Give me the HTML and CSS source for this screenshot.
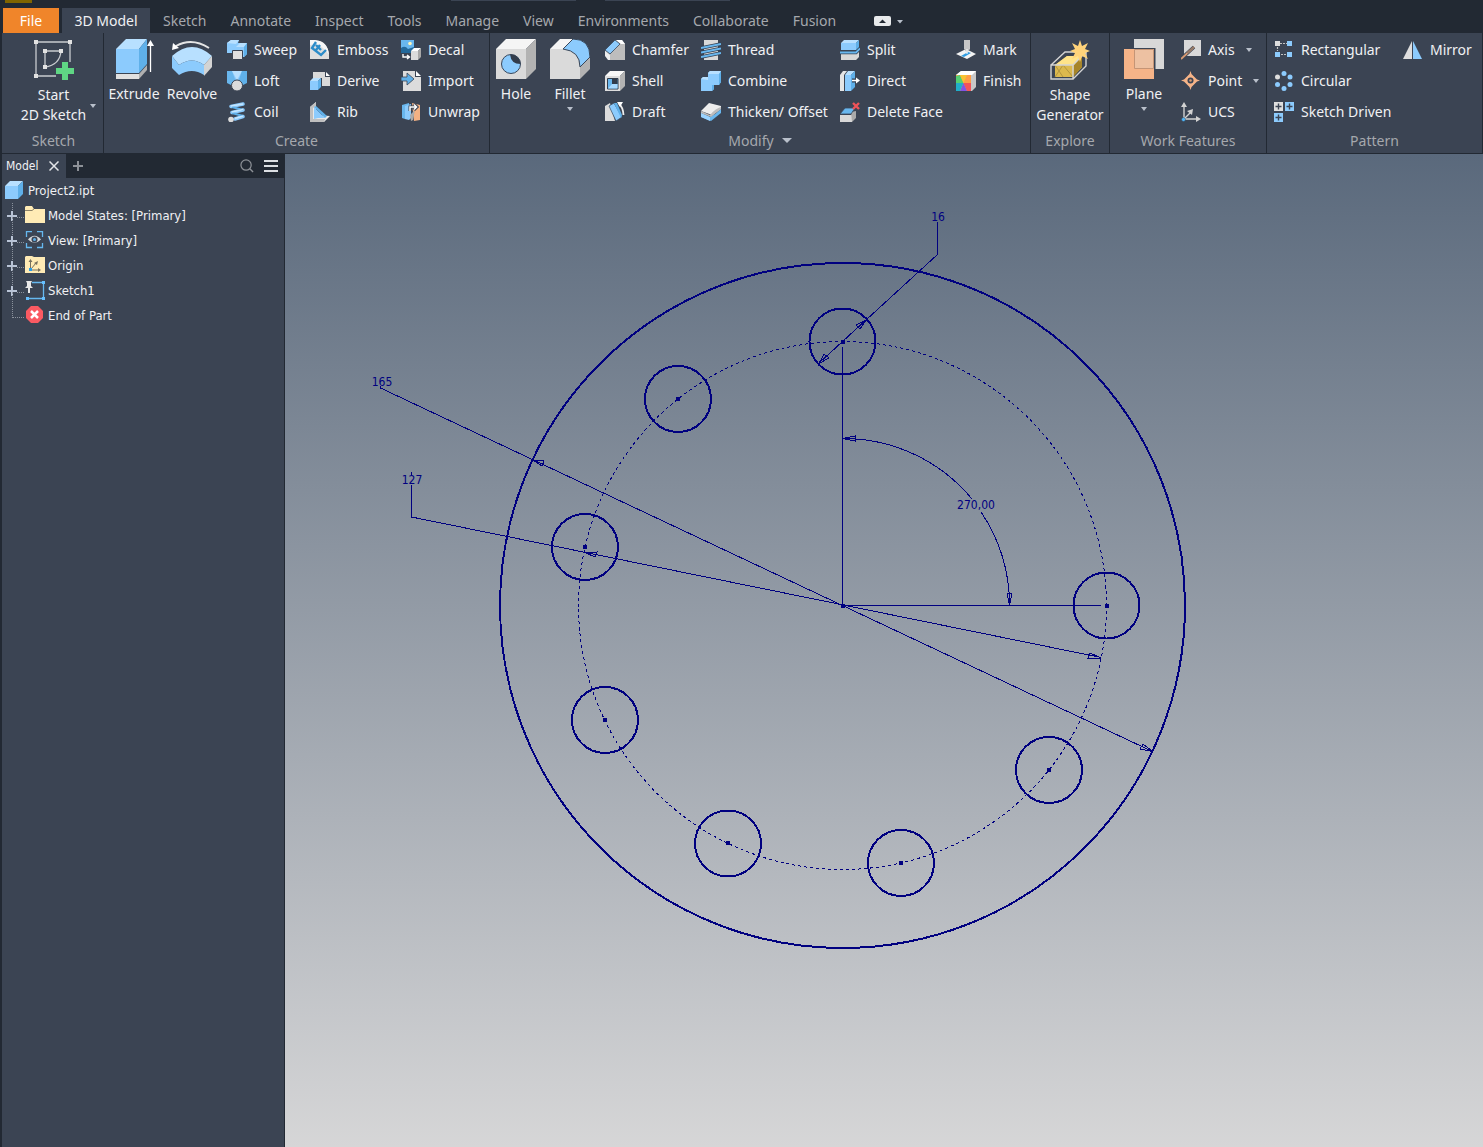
FILE: index.html
```html
<!DOCTYPE html>
<html lang="en">
<head>
<meta charset="utf-8">
<title>Project2.ipt</title>
<link rel="stylesheet" href="styles.css">
</head>
<body>
<div class="app">
  <header class="topbar">
    <div class="quickbar"><span class="quick-logo"></span><span class="quick-field"></span><span class="quick-field"></span></div>
    <nav class="tabs">
      <button class="tab file">File</button>
      <button class="tab active">3D Model</button>
      <button class="tab">Sketch</button>
      <button class="tab">Annotate</button>
      <button class="tab">Inspect</button>
      <button class="tab">Tools</button>
      <button class="tab">Manage</button>
      <button class="tab">View</button>
      <button class="tab">Environments</button>
      <button class="tab">Collaborate</button>
      <button class="tab">Fusion</button>
      <button class="collapse" aria-label="Minimize ribbon">
        <svg width="30" height="12" viewBox="0 0 30 12"><rect x="0" y="1" width="17" height="10" rx="2" fill="#e8eaec"/><path d="M5 8 8.500 4.500 12 8Z" fill="#222933"/><path d="M23 5H29L26 8.500Z" fill="#b9c0cb"/></svg>
      </button>
    </nav>
  </header>

  <div class="ribbon">
    <section class="panel p-sketch">
      <div class="tools">
        <button class="big two">
          <svg width="40" height="40" viewBox="0 0 40 40"><g fill="none" stroke="#c9ccd0" stroke-width="1.300"><path d="M2 2H36V22M2 2V36H22M11 11H27M11 11V27M27 11Q26 25 11 27"/></g><g fill="#e2e2e2"><path d="M0 0h4v4H0zM34 0h4v4h-4zM0 34h4v4H0zM9 9h4v4H9zM25 9h4v4h-4zM9 25h4v4H9z"/></g><path d="M28 22h6v6h6v6h-6v6h-6v-6h-6v-6h6z" fill="#5fd684"/></svg>
          <span>Start<br>2D Sketch</span><i class="caret side"></i>
        </button>
      </div>
      <h2>Sketch</h2>
    </section>

    <section class="panel p-create">
      <div class="tools">
        <button class="big">
          <svg width="40" height="40" viewBox="0 0 40 40"><path d="M2 35H25V40H2Z" fill="#e0e0e0"/><path d="M25 35 33 26V31L25 40Z" fill="#b0b0b0"/><path d="M2 10H25V34H2Z" fill="#8ccbfd"/><path d="M2 10 12 0H33L25 10Z" fill="#b8e0ff"/><path d="M25 10 33 0V25L25 34Z" fill="#5fb0e9"/><path d="M36.500 33V5" stroke="#fff" stroke-width="1.300"/><path d="M33 7 36.500 1 40 7Z" fill="#fff"/></svg>
          <span>Extrude</span>
        </button>
        <button class="big">
          <svg width="40" height="40" viewBox="0 0 40 40"><path d="M0 17Q20-1 40 17L32 26Q20 17 7 26Z" fill="#b8e0ff"/><path d="M0 17 7 26Q20 17 32 26V36Q20 28 7 36L0 29Z" fill="#8ccbfd"/><path d="M32 26 40 17V28L32 37Z" fill="#d4d4d4"/><path d="M37 9Q20-2 4 7" fill="none" stroke="#e4e4e4" stroke-width="2"/><path d="M0 11 1 4 7 9Z" fill="#fff"/></svg>
          <span>Revolve</span>
        </button>
        <button class="small"><svg width="20" height="20" viewBox="0 0 20 20"><path d="M0 3 4 0H12L11 3H20V14L17 17H10L6 13H0Z" fill="#8ccbfd"/><path d="M0 3 4 0H12L9 4ZM9 7 13 3H20L17 7Z" fill="#b8e0ff"/><path d="M17 7 20 3V14L17 17Z" fill="#5fb0e9"/><path d="M5.500 10.500h10v9h-10z" fill="#e0e0e0" stroke="#3b4453"/></svg>Sweep</button>
        <button class="small"><svg width="20" height="20" viewBox="0 0 20 20"><path d="M0 0H20L15 14H5Z" fill="#8ccbfd"/><path d="M0 0H5L9 11 4 14 0 12Z" fill="#69b7ee"/><path d="M5 0H15L10 9Z" fill="#b8e0ff"/><path d="M20 0H15L11 11 16 14 20 12Z" fill="#5fb0e9"/><circle cx="10" cy="14.500" r="5.500" fill="#dcdcdc" stroke="#3b4453"/></svg>Loft</button>
        <button class="small"><svg width="20" height="20" viewBox="0 0 20 20"><g fill="none" stroke="#8ccbfd" stroke-width="3.500" stroke-linecap="round"><path d="M4 4.500 16 2M5 10.500 16 8M8 17 16 14.500"/></g><path d="M5 5 16 8M5 11 16 14" stroke="#5fb0e9" stroke-width="2"/><path d="M4 4 16 2M5 10 16 7.500M8 16.500 16 14" stroke="#c5e6ff" stroke-width="1.500"/><circle cx="4" cy="17.500" r="2.800" fill="#dcdcdc"/></svg>Coil</button>
        <button class="small"><svg width="20" height="20" viewBox="0 0 20 20"><path d="M0 0Q18 0 19 15V19H0Z" fill="#dedede"/><path d="M0 0H5Q18 1 19 15L16 11Q9 3 0 5Z" fill="#f6f6f6"/><path d="M6 2 2 8 11 15 16 10M6 5 11 10M10 5 6 10" fill="none" stroke="#2c8cc9" stroke-width="2.400"/></svg>Emboss</button>
        <button class="small"><svg width="20" height="20" viewBox="0 0 20 20"><path d="M3 1H15V6H20V15H12V7H3Z" fill="#d9d9d9"/><path d="M16 1 20 5H16Z" fill="#fff"/><path d="M0 10H8V19H0Z" fill="#8ccbfd"/><path d="M0 10 3 7H11L8 10Z" fill="#b8e0ff"/><path d="M8 10 11 7V16L8 19Z" fill="#5fb0e9"/></svg>Derive</button>
        <button class="small"><svg width="20" height="20" viewBox="0 0 20 20"><path d="M0 5 6 0V13L20 14 14 20H0Z" fill="#e8e8e8"/><path d="M0 5 6 0V4L3 6V17H15L14 20H0Z" fill="#bfbfbf"/><path d="M4 5 15 16H8L4 17Z" fill="#8ccbfd"/><path d="M4 5 6 4 17 14 15 16Z" fill="#5fb0e9"/></svg>Rib</button>
        <button class="small"><svg width="20" height="20" viewBox="0 0 20 20"><path d="M0 0H13V13H0Z" fill="#69b7ee"/><path d="M0 8Q4 5 7 9L13 7V13H0Z" fill="#23699b"/><circle cx="9" cy="3.500" r="1.800" fill="#fff4b8"/><path d="M10 11H17V20H10Z" fill="#dcdcdc"/><path d="M10 11 13 8H20L17 11Z" fill="#fff"/><path d="M17 11 20 8V17L17 20Z" fill="#a8a8a8"/><path d="M2 14V17H8M6 15 8.500 17 6 19" fill="none" stroke="#fff" stroke-width="1.400"/></svg>Decal</button>
        <button class="small"><svg width="20" height="20" viewBox="0 0 20 20"><path d="M2 0H14V6H20V20H2Z" fill="#dcdcdc"/><path d="M15 0 20 5H15Z" fill="#fff"/><path d="M0 6H6V2L13 8 6 14V10H0Z" fill="#5fb0e9" stroke="#3b4453" stroke-width=".8"/></svg>Import</button>
        <button class="small"><svg width="20" height="20" viewBox="0 0 20 20"><path d="M11 1 19 3V18L13 19Z" fill="#f3b183"/><path d="M1 3 8 1V16L4 17 1 16Z" fill="#69b7ee"/><path d="M4 4 10 2V16L8 18 4 17Z" fill="#8ccbfd"/><path d="M9 13 14 8 12 18 10 19Z" fill="#aaa"/><path d="M9 9V5H15M13 2 16 5 13 8" fill="none" stroke="#3b4453" stroke-width="3"/><path d="M9 9V5H15M13 2.500 15.500 5 13 7.500" fill="none" stroke="#fff" stroke-width="1.500"/></svg>Unwrap</button>
      </div>
      <h2>Create</h2>
    </section>

    <section class="panel p-modify">
      <div class="tools">
        <button class="big">
          <svg width="40" height="40" viewBox="0 0 40 40"><path d="M0 10H30V40H0Z" fill="#dadada"/><path d="M0 10 10 0H40L30 10Z" fill="#f5f5f5"/><path d="M30 10 40 0V30L30 40Z" fill="#b3b3b3"/><circle cx="15" cy="25" r="9.500" fill="#8ccbfd" stroke="#39475a"/><path d="M14 15.500A9.500 9.500 0 0 1 24.500 25Q15 25 14 15.500Z" fill="#323c4b"/></svg>
          <span>Hole</span>
        </button>
        <button class="big">
          <svg width="40" height="40" viewBox="0 0 40 40"><path d="M0 10H12Q30 10 30 28V40H0Z" fill="#dadada"/><path d="M0 10 10 0H23L13 10Z" fill="#f5f5f5"/><path d="M30 28 40 18V30L30 40Z" fill="#b3b3b3"/><path d="M13 10 23 0Q40 0 40 18L30 28Q30 12 13 10Z" fill="#8ccbfd" stroke="#39475a"/></svg>
          <span>Fillet</span><i class="caret"></i>
        </button>
        <button class="small"><svg width="20" height="20" viewBox="0 0 20 20"><path d="M0 11 11 0H17L20 4V20H5L0 15Z" fill="#bdbdbd"/><path d="M11 0H17L20 4 16 4Z" fill="#fff"/><path d="M0 10 10 0 15 4 5 14Z" fill="#8ccbfd" stroke="#39475a" stroke-width=".8"/><path d="M0 11 5 15V20H3L0 16Z" fill="#eee"/></svg>Chamfer</button>
        <button class="small"><svg width="20" height="20" viewBox="0 0 20 20"><path d="M0 5H15V20H0Z" fill="#dedede"/><path d="M0 5 5 0H20L15 5Z" fill="#f8f8f8"/><path d="M15 5 20 0V15L15 20Z" fill="#b3b3b3"/><path d="M2.500 7.500H13V18H2.500Z" fill="#69b7ee" stroke="#323c4b"/><path d="M7 8H12.500V13H7Z" fill="#323c4b"/><path d="M3 17.500 7 13H12.500V17.500Z" fill="#a9daff"/></svg>Shell</button>
        <button class="small"><svg width="20" height="20" viewBox="0 0 20 20"><path d="M0 4 5 1 10 19H0Z" fill="#dcdcdc"/><path d="M4 4 9 1 17 15 11 19Z" fill="#8ccbfd" stroke="#39475a" stroke-width=".7"/><path d="M9 1 12 1 17 13 16 16Z" fill="#5fb0e9"/><path d="M14 2Q18 5 18.500 13" fill="none" stroke="#eee" stroke-width="1.800"/><path d="M12 0H18L15 5Z" fill="#fff"/></svg>Draft</button>
        <button class="small"><svg width="20" height="20" viewBox="0 0 20 20"><path d="M3 0H17V20H3Z" fill="#d9d9d9"/><path d="M0 8 20 4M0 12.500 20 8.500M0 17 20 13" stroke="#344052" stroke-width="3.600"/><path d="M0 8 20 4M0 12.500 20 8.500M0 17 20 13" stroke="#69b7ee" stroke-width="2"/></svg>Thread</button>
        <button class="small"><svg width="20" height="20" viewBox="0 0 20 20"><path d="M0 8 2 6H7V2L9 0H20V11L18 14H13V18L11 20H0Z" fill="#8ccbfd"/><path d="M7 2 9 0H20L18 3H8ZM0 8 2 6H7V9Z" fill="#b8e0ff"/><path d="M18 3 20 0V11L18 14ZM11 14H13V18L11 20Z" fill="#5fb0e9"/></svg>Combine</button>
        <button class="small"><svg width="20" height="20" viewBox="0 0 20 20"><path d="M0 9 8 1 20 4V7L11 13Z" fill="#ededed"/><path d="M0 11 9 15Q15 12 20 7V11L10 19 0 15Z" fill="#69b7ee"/><path d="M0 11 9 15V19L0 15Z" fill="#9ad3ff"/><path d="M0 9 9 13Q15 6 20 5V7L10 15 0 11Z" fill="#bdbdbd"/></svg>Thicken/ Offset</button>
        <button class="small"><svg width="20" height="20" viewBox="0 0 20 20"><path d="M1 14H16L19 11V17L16 20H1Z" fill="#d8d8d8"/><path d="M1 3H16V10H1Z" fill="#8ccbfd"/><path d="M1 3 4 0H19L16 3Z" fill="#b8e0ff"/><path d="M16 3 19 0V8L16 11Z" fill="#5fb0e9"/><path d="M0 12.500H16L20 8.500" fill="none" stroke="#344052" stroke-width="3.500"/><path d="M0 12.500H16L20 8.500" fill="none" stroke="#69b7ee" stroke-width="1.800"/></svg>Split</button>
        <button class="small"><svg width="20" height="20" viewBox="0 0 20 20"><path d="M0 4 3 0H7L4 4V20H0Z" fill="#e5e5e5"/><path d="M5 4H11V20H5Z" fill="#8ccbfd"/><path d="M5 4 8 0H15L11 4Z" fill="#b8e0ff"/><path d="M11 4 15 0V16L11 20Z" fill="#5fb0e9"/><path d="M12 9.500H17" stroke="#344052" stroke-width="4"/><path d="M12 9.500H17" stroke="#fff" stroke-width="1.500"/><path d="M16 6.500 20 9.500 16 12.500Z" fill="#fff"/></svg>Direct</button>
        <button class="small"><svg width="20" height="20" viewBox="0 0 20 20"><path d="M0 13H12V20H0Z" fill="#d8d8d8"/><path d="M11 10 16 9V16L12 20Z" fill="#aaa"/><path d="M0 12 5 6H15L11 12Z" fill="#69b7ee" stroke="#39475a" stroke-width=".8"/><path d="M13 1 19 7M19 1 13 7" stroke="#ef5359" stroke-width="2.400"/></svg>Delete Face</button>
        <button class="small"><svg width="20" height="20" viewBox="0 0 20 20"><path d="M0 14 8 10H12L20 14 11 19Z" fill="#f3f3f3"/><path d="M5 16 12 12 15 13 8 17Z" fill="#2f9be0"/><path d="M8 0H14V9L11 13 8 9Z" fill="#c7c7c7"/><path d="M11 9V14" stroke="#fff"/></svg>Mark</button>
        <button class="small"><svg width="20" height="20" viewBox="0 0 20 20"><path d="M0 4 5 0H20V16L16 20H0Z" fill="#c8c8c8"/><path d="M0 4 5 0H20L16 4Z" fill="#fff"/><path d="M0 4H15V20H0Z" fill="#ff9d45"/><path d="M0 5V12H7.500L4 4Z" fill="#55cf72"/><path d="M4 4H11L7.500 12Z" fill="#f7c332"/><path d="M7.500 12H15V20H11Z" fill="#f45459"/><path d="M7.500 12 11 20H4Z" fill="#8253e6"/><path d="M0 12H7.500L4 20H0Z" fill="#20aeca"/></svg>Finish</button>
      </div>
      <h2>Modify <i class="caret wide"></i></h2>
    </section>

    <section class="panel p-explore">
      <div class="tools">
        <button class="big two">
          <svg width="40" height="40" viewBox="0 0 40 40"><path d="M5 25 17 16H32V27L23 37H5Z" fill="#dcb94e"/><path d="M5 25 17 16H32L24 25Z" fill="#ffe389"/><path d="M24 25 32 16V27L23 37Z" fill="#a78529"/><path d="M5 37 13 25 23 37M5 25 13 37" fill="none" stroke="#b3963f"/><path d="M1 25H23V39H1ZM1 25 15 12H36L23 25M36 12V26L23 39" fill="none" stroke="#d4d4d4" stroke-width="1.400"/><path d="m30 0 2 6 6-3-3 6 5 2-5 2 3 6-6-3-2 6-2-6-6 3 3-6-5-2 5-2-3-6 6 3Z" fill="#ffd37a"/></svg>
          <span>Shape<br>Generator</span>
        </button>
      </div>
      <h2>Explore</h2>
    </section>

    <section class="panel p-work">
      <div class="tools">
        <button class="big">
          <svg width="40" height="40" viewBox="0 0 40 40"><path d="M10 0H40V30H10Z" fill="#d8d8d8"/><path d="M31.500 9V31.500H9V9Z" fill="#3b4453"/><path d="M0 10H30V40H0Z" fill="#f6b488"/><path d="M10.500 10.500H29.500V29.500H10.500Z" fill="#edc1a2" stroke="#c59576"/></svg>
          <span>Plane</span><i class="caret"></i>
        </button>
        <button class="small"><svg width="20" height="20" viewBox="0 0 20 20"><path d="M3 0H20V16H3Z" fill="#d9d9d9"/><path d="M0 19 13 7" stroke="#3b4453" stroke-width="3.500"/><path d="M0 19 13 7" stroke="#d89a72" stroke-width="1.800"/><path d="M6 13 13 7" stroke="#927969" stroke-width="2"/></svg>Axis<i class="caret"></i></button>
        <button class="small"><svg width="20" height="20" viewBox="0 0 20 20"><path d="M9.500 0 10.500 3 16 8.500 19 9.500 16 10.500 10.500 16 9.500 19 8.500 16 3 10.500 0 9.500 3 8.500 8.500 3Z" fill="#f6b488"/><circle cx="9.500" cy="9.500" r="3" fill="#3b4453"/><circle cx="9.500" cy="9.500" r="1.300" fill="#d89a72"/></svg>Point<i class="caret"></i></button>
        <button class="small"><svg width="20" height="20" viewBox="0 0 20 20"><path d="M3 4V17H17M3 17 10 10" fill="none" stroke="#d2d2d2" stroke-width="1.400"/><path d="M0 5 3 0 6 5ZM15 14 20 17 15 20ZM6 9 12 7 11 13Z" fill="#d2d2d2"/><circle cx="2.500" cy="17.500" r="2" fill="#4fb3f5" stroke="#3b4453" stroke-width=".5"/></svg>UCS</button>
      </div>
      <h2>Work Features</h2>
    </section>

    <section class="panel p-pattern">
      <div class="tools">
        <button class="small"><svg width="20" height="20" viewBox="0 0 20 20"><path d="M6 3.500H13M7 14.500H13M3.500 7V11" stroke="#c3c3c3" stroke-width="1.200" stroke-dasharray="2 1"/><path d="M1 1h5v5H1z" fill="#dedede"/><path d="M13 1h5v5h-5zM1 12h5v5H1zM13 12h5v5h-5z" fill="#8ccbfd"/></svg>Rectangular</button>
        <button class="small"><svg width="20" height="20" viewBox="0 0 20 20"><circle cx="3.500" cy="6" r="2.500" fill="#dedede"/><g fill="#8ccbfd"><circle cx="10" cy="2.500" r="2.500"/><circle cx="16" cy="6" r="2.500"/><circle cx="3.500" cy="13.500" r="2.500"/><circle cx="16" cy="13.500" r="2.500"/><circle cx="10" cy="17.500" r="2.500"/></g></svg>Circular</button>
        <button class="small"><svg width="20" height="20" viewBox="0 0 20 20"><path d="M0 0h9v9H0z" fill="#dedede"/><path d="M11 0h9v9h-9zM0 11h9v9H0z" fill="#8ccbfd"/><path d="M4.500 1.500v6M1.500 4.500h6M15.500 1.500v6M12.500 4.500h6M4.500 12.500v6M1.500 15.500h6" stroke="#3b4453" stroke-width="1.400"/></svg>Sketch Driven</button>
        <button class="small"><svg width="20" height="20" viewBox="0 0 20 20"><path d="M9 1V19H0Z" fill="#dedede"/><path d="M10 1V19H19Z" fill="#8ccbfd"/></svg>Mirror</button>
      </div>
      <h2>Pattern</h2>
    </section>
  </div>

  <main class="workspace">
    <aside class="browser">
      <div class="browser-bar">
        <div class="browser-tab">Model <button class="icon-btn" aria-label="Close"><svg width="10" height="10" viewBox="0 0 10 10"><path d="M.5.5 9.500 9.500M9.500.5.5 9.500" stroke="#e3e5e8" stroke-width="1.500"/></svg></button></div>
        <button class="icon-btn add" aria-label="Add"><svg width="10" height="10" viewBox="0 0 10 10"><path d="M5 0V10M0 5H10" stroke="#8d9197" stroke-width="2"/></svg></button>
        <button class="icon-btn" aria-label="Search"><svg width="14" height="14" viewBox="0 0 15 15"><circle cx="6.500" cy="6.500" r="5.500" fill="none" stroke="#8d9197" stroke-width="1.300"/><path d="M10.500 10.500 14 14" stroke="#8d9197" stroke-width="1.500"/></svg></button>
        <button class="icon-btn" aria-label="Menu"><svg width="14" height="12" viewBox="0 0 14 12"><path d="M0 0H14V2H0ZM0 5H14V7H0ZM0 10H14V12H0Z" fill="#dcdfe3"/></svg></button>
      </div>
      <div class="root"><svg width="20" height="20" viewBox="0 0 20 20"><path d="M1 5H14V18H1Z" fill="#8ccbfd"/><path d="M1 5 6 0H19L14 5Z" fill="#b8e0ff"/><path d="M14 5 19 0V13L14 18Z" fill="#5fb0e9"/></svg>Project2.ipt</div>
      <ul class="tree">
        <li><svg class="plus" width="10" height="10" viewBox="0 0 10 10"><path d="M5 0V10M0 5H10" stroke="#b9c4d6" stroke-width="2"/></svg><svg width="20" height="20" viewBox="0 0 20 20"><path d="M0 1 1 0H7L9 3H20V17H0Z" fill="#ffebb5"/><path d="M0 4.500H7L9 3" fill="none" stroke="#8d8367"/></svg>Model States: [Primary]</li>
        <li><svg class="plus" width="10" height="10" viewBox="0 0 10 10"><path d="M5 0V10M0 5H10" stroke="#b9c4d6" stroke-width="2"/></svg><svg width="20" height="20" viewBox="0 0 20 20"><path d="M1.500 6V.5H7M12 .5H17.500V6M17.500 12V16.500H12M7 16.500H1.500V12" fill="none" stroke="#66b8ef" stroke-width="1.300"/><path d="M3 8.500Q9.500 1 16 8.500 9.500 15 3 8.500Z" fill="#d5d7da"/><circle cx="9.500" cy="8.500" r="3" fill="#3b4453"/><circle cx="9.500" cy="8.500" r="1.500" fill="#5fb0e9"/></svg>View: [Primary]</li>
        <li><svg class="plus" width="10" height="10" viewBox="0 0 10 10"><path d="M5 0V10M0 5H10" stroke="#b9c4d6" stroke-width="2"/></svg><svg width="20" height="20" viewBox="0 0 20 20"><path d="M0 1 1 0H7L9 1H20V17H0Z" fill="#ffebb5"/><path d="M5.500 5V14H13M6 13 11 7" fill="none" stroke="#77705e"/><path d="M3.500 6 5.500 3 7.500 6ZM13 12 16 14 13 16ZM9 7 13 5 12 9Z" fill="#77705e"/><path d="M4 12h3v3H4z" fill="#299de8"/></svg>Origin</li>
        <li><svg class="plus" width="10" height="10" viewBox="0 0 10 10"><path d="M5 0V10M0 5H10" stroke="#b9c4d6" stroke-width="2"/></svg><svg width="20" height="20" viewBox="0 0 20 20"><path d="M7 1.500H18M18.500 2V17M18 17.500H2" stroke="#66b8ef" stroke-width="1.300"/><path d="M17 0h3v3h-3zM17 16h3v3h-3zM1 16h3v3H1z" fill="#66c0ff"/><path d="M1 0H7L6 2V5L8 7H0L2 5V2ZM3 7H5V12H3Z" fill="#e8e8e8"/></svg>Sketch1</li>
        <li><span class="plus none"></span><svg width="20" height="20" viewBox="0 0 20 20"><path d="M6 0H13L18 5V12L13 17H6L1 12V5Z" fill="#fa5a62"/><path d="M6 5 13 12M13 5 6 12" stroke="#fff" stroke-width="2.500"/></svg>End of Part</li>
      </ul>
    </aside>

    <div class="canvas">
      <svg class="drawing" viewBox="285 154 1198 993" preserveAspectRatio="xMidYMid meet" fill="none" stroke="#000080" shape-rendering="crispEdges">
        <g stroke-width="2">
          <circle cx="842.500" cy="605.500" r="342.500"/>
          <circle cx="842.500" cy="341.500" r="33"/>
          <circle cx="678" cy="399" r="33"/>
          <circle cx="585" cy="547" r="33"/>
          <circle cx="605" cy="720" r="33"/>
          <circle cx="728" cy="843.500" r="33"/>
          <circle cx="901" cy="863" r="33"/>
          <circle cx="1049" cy="770" r="33"/>
          <circle cx="1106.500" cy="605.500" r="33"/>
        </g>
        <circle cx="842.500" cy="605.500" r="264" stroke-dasharray="3 3"/>
        <path d="M842.500 347V605.500H1101"/>
        <path d="M937.500 222V254.500L818.500 363.500M380.500 386V388L1152.500 751.500M411.500 472V475M411.500 485V517L1101 657.500"/>
        <path d="M843 438.500A167 167 0 0 1 972 499M981 512A167 167 0 0 1 1009.500 605"/>
        <path d="M866 320 856 325 860 329ZM819 363.500 824 354 829 358ZM533 460 544 461 542 466ZM585 552.500 597 552 595 557ZM1101 658 1090 653 1088 658ZM1152.500 751.500 1143 744 1140 749ZM843 438.500 855 436 855 441ZM1009.500 605 1007 593 1012 593Z"/>
        <path fill="#000080" stroke="none" d="M841 340h4v4h-4zM676 397h4v4h-4zM583 545h4v4h-4zM603 718h4v4h-4zM726 841h4v4h-4zM899 861h4v4h-4zM1047 768h4v4h-4zM1105 604h4v4h-4zM841 604h4v4h-4z"/>
        <g class="dims" text-anchor="middle">
          <text x="938" y="221">16</text>
          <text x="382" y="386">165</text>
          <text x="412" y="484">127</text>
          <text x="976" y="509">270,00</text>
        </g>
      </svg>
    </div>
  </main>
</div>
</body>
</html>
```
FILE: styles.css
```css
* { box-sizing: border-box; }

body {
  margin: 0;
  background: #222933;
  color: #f0f1f3;
  font: 14px/20px "Noto Sans", "Open Sans", sans-serif;
}

button {
  margin: 0;
  padding: 0;
  border: 0;
  background: none;
  color: inherit;
  font: inherit;
  white-space: nowrap;
}

svg { display: block; flex: none; }

.app {
  display: flex;
  flex-direction: column;
  min-height: 100vh;
}

/* Title strip and tabs */
.quickbar {
  display: flex;
  height: 8px;
  padding-left: 5px;
}
.quick-logo { width: 27px; height: 3px; background: #806400; margin-right: 419px; }
.quick-field { width: 125px; height: 1px; background: #3b4453; margin-right: 29px; }

.tabs {
  display: flex;
  height: 25px;
  padding-left: 3px;
}
.tab { padding: 0 12px; color: #a5a8ad; }
.tab.file { width: 56px; margin-right: 3px; background: #f0852a; color: #fff; }
.tab.active { width: 88px; padding: 0; margin-right: 1px; background: #3b4453; color: #f0f1f3; }
.collapse { margin-left: 26px; }

/* Ribbon */
.ribbon {
  display: flex;
  height: 121px;
  margin-left: 2px;
  background: #3b4453;
  border-bottom: 1px solid #222933;
}
.panel {
  display: flex;
  flex-direction: column;
  flex: none;
  padding-top: 2px;
  border-right: 1px solid #222933;
}
.panel h2 {
  display: flex;
  justify-content: center;
  align-items: center;
  gap: 8px;
  margin: 0;
  height: 28px;
  font-size: 14px;
  font-weight: 400;
  color: #a5a8ad;
}
.tools {
  display: grid;
  grid-auto-flow: column;
  grid-template-rows: repeat(3, 31px);
}
.big {
  grid-row: 1 / -1;
  display: flex;
  flex-direction: column;
  align-items: center;
  padding-top: 4px;
  gap: 5px;
  position: relative;
}
.big.two { padding-top: 5px; }
.small {
  display: flex;
  align-items: center;
  gap: 7px;
  padding-bottom: 1px;
}
.caret {
  border: 3px solid transparent;
  border-top: 4px solid #b9c0cb;
  border-bottom: 0;
}
.big .caret { margin-top: -2px; }
.small .caret { margin-left: 4px; }
.caret.wide { border-width: 5px 5px 0; }
.big .caret.side { position: absolute; right: 7px; top: 71px; }

.p-sketch { width: 102px; padding-left: 2px; }
.p-create { width: 386px; }
.p-create .tools { grid-template-columns: 60px 56px 83px 91px 84px; }
.p-modify { width: 541px; }
.p-modify .tools { grid-template-columns: 52px 56px 96px 139px 116px 72px; }
.p-create .small, .p-modify .small { margin-left: 7px; margin-right: -7px; }
.p-explore { width: 79px; }
.p-work { width: 157px; }
.p-work .tools { grid-template-columns: 68px 1fr; }
.p-work .small { margin-left: 3px; }
.p-pattern { flex: 1; }
.p-pattern .tools { grid-template-columns: 129px 1fr; padding-left: 7px; }

/* Model browser */
.workspace { display: flex; flex: 1; }
.browser {
  width: 283px;
  margin: 0 0 0 2px;
  background: #3b4453;
  border-right: 1px solid #222933;
  font: 13px/24px "DejaVu Sans Condensed", "DejaVu Sans", sans-serif;
}
.browser-bar {
  display: flex;
  align-items: center;
  gap: 10px;
  height: 24px;
  padding-right: 6px;
  background: #222933;
}
.browser-tab {
  display: flex;
  align-items: center;
  justify-content: space-between;
  width: 64px;
  height: 24px;
  padding: 0 7px 0 4px;
  background: #3b4453;
  font-size: 12px;
}
.add { margin: 0 auto 0 -3px; }
.root {
  display: flex;
  align-items: center;
  gap: 4px;
  height: 25px;
  padding: 1px 0 0 2px;
}
.tree { margin: 0; padding: 0 0 0 5px; list-style: none; }
.tree li {
  display: flex;
  align-items: center;
  gap: 3px;
  height: 25px;
  padding-top: 1px;
  position: relative;
}
.tree li::before {
  content: "";
  position: absolute;
  left: 5px;
  top: -11px;
  width: 11px;
  height: 25px;
  border-left: 1px dotted #8b929d;
  border-bottom: 1px dotted #8b929d;
}
.tree li:first-child::before { top: 0; height: 14px; }
.plus {
  width: 10px;
  margin-right: 5px;
  position: relative;
  background: #3b4453;
}
.plus.none { background: none; }

/* Sketch canvas */
.canvas {
  flex: 1;
  display: flex;
  min-width: 0;
  background: linear-gradient(#5a697c, #d6d6d7);
}
.drawing { width: 100%; height: auto; flex: 1; }
.dims {
  fill: #000080;
  stroke: none;
  font: 12px "DejaVu Sans Condensed", "DejaVu Sans", sans-serif;
}
```
